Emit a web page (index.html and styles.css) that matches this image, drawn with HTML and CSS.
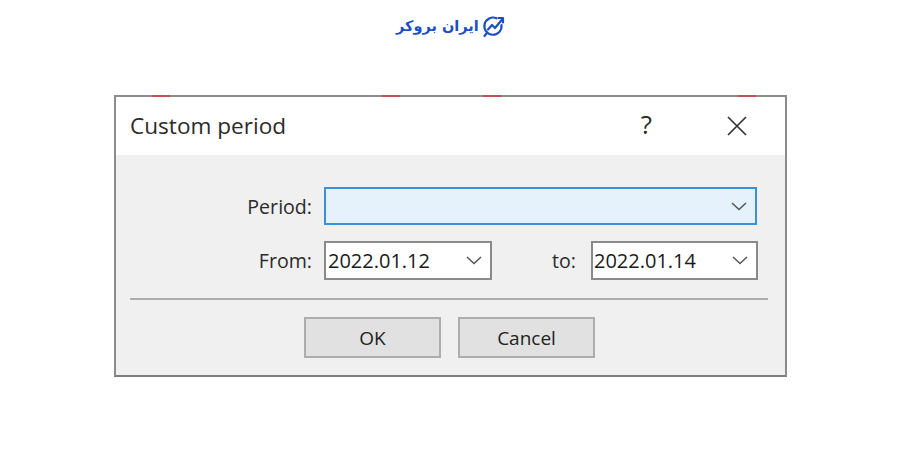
FILE: index.html
```html
<!DOCTYPE html>
<html lang="en">
<head>
    <meta charset="UTF-8">
    <title>Custom period</title>
    <link rel="stylesheet" href="styles.css">
</head>
<body>
    <!-- Logo -->
    <div class="logo">
        <span class="logo-text" lang="fa" dir="rtl">ایران بروکر</span>
        <svg class="logo-icon" width="23" height="23" viewBox="0 0 23 23" fill="none" stroke="#1b4fc4" stroke-width="2.2" stroke-linecap="round" stroke-linejoin="round">
            <path d="M19.5 10a8.6 8.6 0 1 1-5-6.7"/>
            <path d="M4.5 18.5 2.5 21"/>
            <path d="M6 14.5l4-4.5 3 3 7.5-9"/>
            <path d="M16.5 3h4.5v4.5"/>
        </svg>
    </div>

    <div class="dialog">
        <span class="edge-mark mark-1"></span>
        <span class="edge-mark mark-2"></span>
        <span class="edge-mark mark-3"></span>
        <span class="edge-mark mark-4"></span>

        <div class="title-bar">
            <span class="title">Custom period</span>
            <span class="help">?</span>
            <svg class="close" width="22" height="22" viewBox="0 0 22 22" fill="none" stroke="#333" stroke-width="1.7">
                <path d="M2 2l18 18M20 2L2 20"/>
            </svg>
        </div>

        <div class="dialog-body">
            <div class="row">
                <label class="field-label">Period:</label>
                <div class="combo combo-period">
                    <span class="combo-value"></span>
                    <svg class="chevron" width="16" height="9" viewBox="0 0 16 9" fill="none" stroke="#555" stroke-width="1.5"><path d="M1 1l7 6.5L15 1"/></svg>
                </div>
            </div>

            <div class="row row-dates">
                <label class="field-label">From:</label>
                <div class="combo combo-from">
                    <span class="combo-value">2022.01.12</span>
                    <svg class="chevron" width="16" height="9" viewBox="0 0 16 9" fill="none" stroke="#555" stroke-width="1.5"><path d="M1 1l7 6.5L15 1"/></svg>
                </div>
                <label class="field-label label-to">to:</label>
                <div class="combo combo-to">
                    <span class="combo-value">2022.01.14</span>
                    <svg class="chevron" width="16" height="9" viewBox="0 0 16 9" fill="none" stroke="#555" stroke-width="1.5"><path d="M1 1l7 6.5L15 1"/></svg>
                </div>
            </div>

            <hr class="separator">

            <div class="buttons">
                <button class="btn">OK</button>
                <button class="btn">Cancel</button>
            </div>
        </div>
    </div>
</body>
</html>
```
FILE: styles.css
```css
body {
    margin: 0;
    background-color: #fff;
    font-family: 'Open Sans', 'Noto Sans', sans-serif;
    color: #222;
}

.logo {
    height: 95px;
    box-sizing: border-box;
    padding: 15px 395px 0 396px;
    display: flex;
    justify-content: space-between;
    align-items: flex-start;
}

.logo-text {
    font-family: 'DejaVu Sans', sans-serif;
    font-weight: bold;
    font-size: 14.5px;
    line-height: 22px;
    color: #1b4fc4;
}

.dialog {
    position: relative;
    box-sizing: border-box;
    width: 673px;
    height: 282px;
    margin-left: 114px;
    border: 2px solid #8c8c8c;
    border-bottom-color: #7d7d7d;
    background-color: #f0f0f0;
}

.edge-mark {
    position: absolute;
    top: -2px;
    width: 18px;
    height: 2px;
    background-color: #c0504d;
}

.mark-1 { left: 36px; }
.mark-2 { left: 266px; }
.mark-3 { left: 367px; }
.mark-4 { left: 622px; }

.title-bar {
    height: 58px;
    background-color: #fff;
    display: flex;
    align-items: center;
    padding-left: 14px;
}

.title {
    font-size: 22.6px;
    color: #2b2b2b;
    flex: 1;
    margin-top: -2px;
}

.help {
    font-size: 26px;
    font-weight: 500;
    color: #2b2b2b;
    margin-right: 74px;
    margin-top: -4px;
}

.close {
    margin-right: 37px;
}

.dialog-body {
    padding: 32px 17px 0 14px;
}

.row {
    display: flex;
    align-items: center;
    margin-bottom: 16px;
}

.row-dates .combo {
    height: 39px;
}

.field-label {
    width: 182px;
    margin-right: 13px;
    text-align: right;
    font-size: 19.6px;
    font-weight: 500;
    color: #2b2b2b;
}

.combo {
    box-sizing: border-box;
    height: 38px;
    margin-left: -1px;
    display: flex;
    align-items: center;
    justify-content: space-between;
    padding: 0 8px 0 2px;
    background-color: #fff;
    border: 2px solid #8a8a8a;
    font-size: 20px;
    color: #1a1a1a;
}

.combo-period {
    width: 433px;
    background-color: #e5f1fb;
    border-color: #3d8fd6;
}

.combo-from {
    width: 168px;
}

.combo-to {
    width: 167px;
    padding-left: 1px;
}

.label-to {
    width: 84px;
    margin-right: 16px;
}

.separator {
    margin: 0;
    margin-top: 18px;
    border: none;
    border-top: 2px solid #adadad;
}

.buttons {
    display: flex;
    gap: 17px;
    margin-top: 17px;
    padding-left: 174px;
}

.btn {
    box-sizing: border-box;
    width: 137px;
    height: 41px;
    padding: 0;
    background-color: #e1e1e1;
    border: 2px solid #adadad;
    font-family: inherit;
    font-size: 19px;
    font-weight: 500;
    color: #222;
}
```
